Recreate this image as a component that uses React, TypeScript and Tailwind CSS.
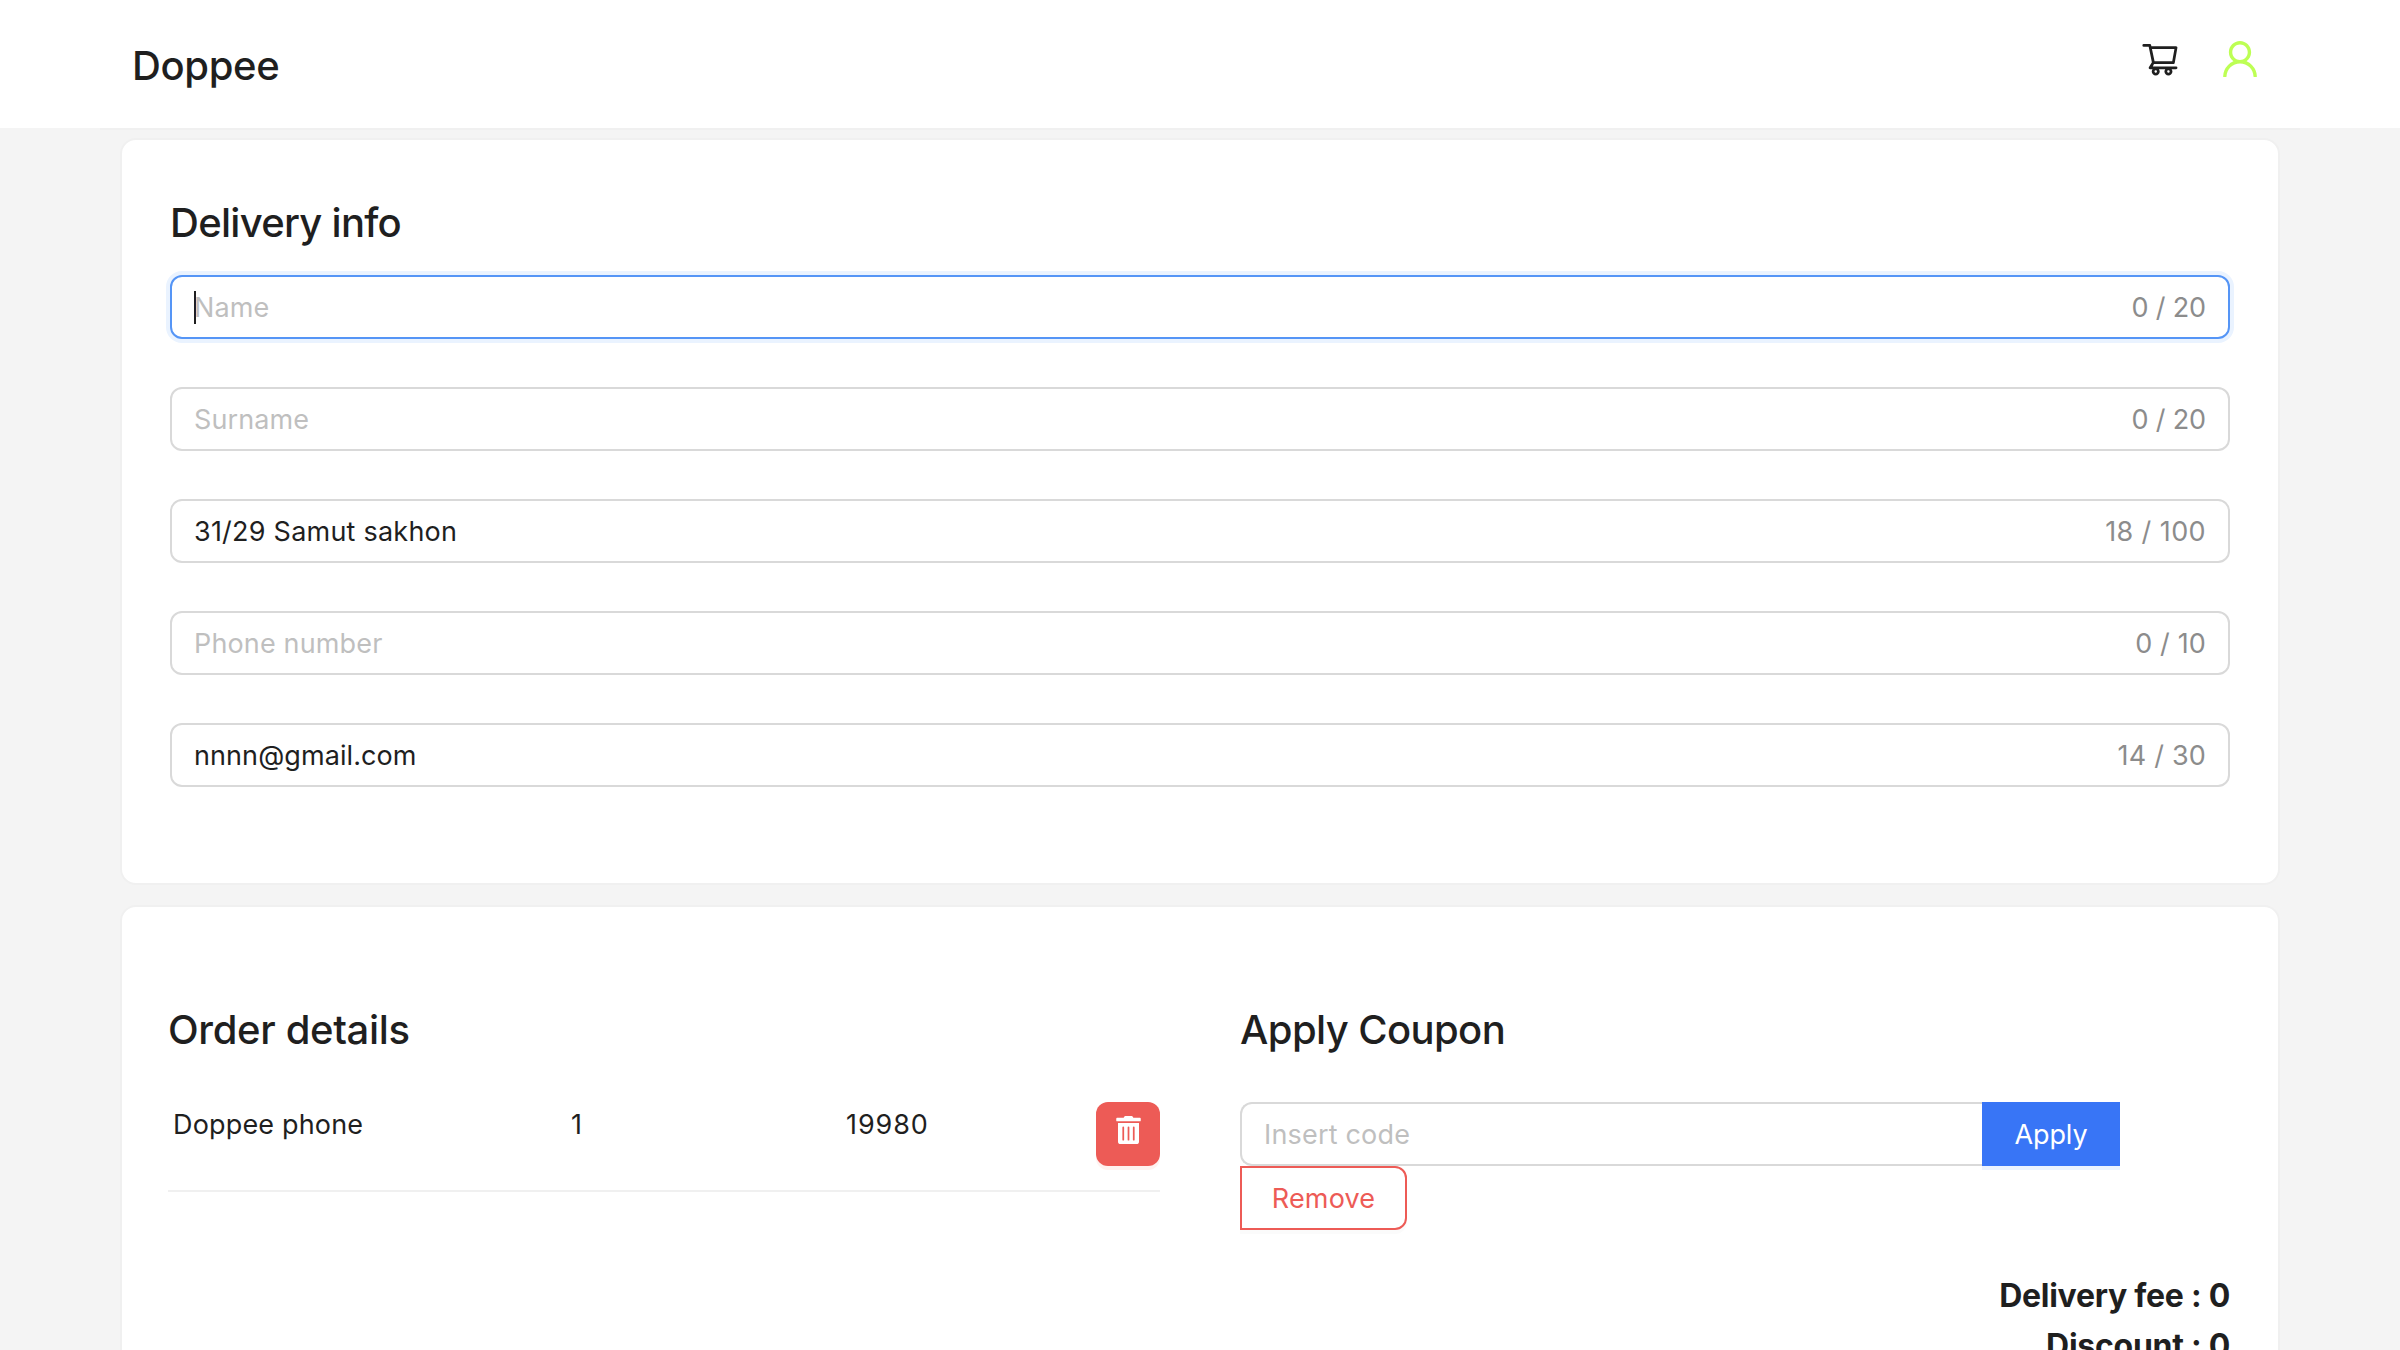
import { AiOutlineShoppingCart, AiOutlineUser } from 'react-icons/ai';
import { FaTrashAlt } from 'react-icons/fa';

type Field = {
  placeholder: string;
  value?: string;
  count: string;
  countTracking: string;
  textTracking: string;
  focused?: boolean;
};

const fields: Field[] = [
  { placeholder: 'Name', count: '0 / 20', countTracking: 'tracking-[-0.15px]', textTracking: 'tracking-[0.15px]', focused: true },
  { placeholder: 'Surname', count: '0 / 20', countTracking: 'tracking-[-0.15px]', textTracking: 'tracking-[0.12px]' },
  { placeholder: 'Address', value: '31/29 Samut sakhon', count: '18 / 100', countTracking: 'tracking-[0.4px]', textTracking: 'tracking-[0.23px]' },
  { placeholder: 'Phone number', count: '0 / 10', countTracking: 'tracking-[0.15px]', textTracking: 'tracking-[0.15px]' },
  { placeholder: 'Email', value: 'nnnn@gmail.com', count: '14 / 30', countTracking: 'tracking-[0.2px]', textTracking: 'tracking-[0.08px]' },
];

function Header() {
  return (
    <header className="flex h-32 items-start justify-between bg-white pr-[137px] pl-[132px]">
      <h1 className="mt-[43px] text-[40px] leading-[45px] font-medium tracking-[-0.35px]">Doppee</h1>
      <div className="flex items-start gap-[37px]">
        <AiOutlineShoppingCart className="mt-[39px] size-10" />
        <AiOutlineUser className="mt-9 size-[46px] text-[#bdff54]" />
      </div>
    </header>
  );
}

function TextField({ field }: { field: Field }) {
  const frame = field.focused
    ? 'border-[#5595f6] shadow-[0_0_0_4px_#eaf3ff]'
    : 'border-[#d9d9d9]';
  return (
    <div className={`flex h-16 items-center justify-between rounded-xl border-2 bg-white px-[22px] leading-[43px] ${frame}`}>
      <div className="flex items-center">
        {field.focused && <span className="-mr-0.5 h-[33px] w-0.5 bg-[#1f1f1f]" />}
        <span className={`pt-px ${field.textTracking} ${field.value ? '' : 'text-[#bfbfbf]'}`}>
          {field.value ?? field.placeholder}
        </span>
      </div>
      <span className={`pt-px text-[#8c8c8c] ${field.countTracking}`}>{field.count}</span>
    </div>
  );
}

function DeliveryInfo() {
  return (
    <section className="h-[747px] rounded-2xl border-2 border-[#f0f0f0] bg-white px-12 pt-[60px]">
      <h2 className="mb-[30px] text-[40px] leading-[45px] font-medium tracking-[-0.72px]">Delivery info</h2>
      <div className="flex flex-col gap-12">
        {fields.map((field) => (
          <TextField key={field.placeholder} field={field} />
        ))}
      </div>
    </section>
  );
}

function OrderDetails() {
  return (
    <div className="w-[992px]">
      <h2 className="text-[40px] leading-[45px] font-medium tracking-[-0.35px]">Order details</h2>
      <div className="mt-[50px] flex h-[90px] items-start border-b-2 border-[#f0f0f0] pl-[5px]">
        <span className="w-[398px] leading-[45px] tracking-[0.17px]">Doppee phone</span>
        <span className="w-[275px] leading-[45px]">1</span>
        <span className="flex-1 leading-[45px] tracking-[0.9px]">19980</span>
        <button className="flex size-16 justify-center rounded-xl bg-[#ed5b56] pt-3.5 text-white shadow-[0_4px_0_#fff2f0]">
          <FaTrashAlt className="h-7 w-[25px]" />
        </button>
      </div>
    </div>
  );
}

function Coupon() {
  return (
    <div className="w-[990px]">
      <h2 className="text-[40px] leading-[45px] font-medium tracking-[-0.6px]">Apply Coupon</h2>
      <div className="mt-[50px] flex w-[880px]">
        <div className="flex h-16 flex-1 items-center rounded-l-xl border-2 border-r-0 border-[#d9d9d9] px-[22px] leading-[43px] text-[#bfbfbf]">
          <span className="pt-px tracking-[0.18px]">Insert code</span>
        </div>
        <button className="h-16 w-[138px] bg-[#3875f6] pt-px leading-[43px] tracking-[-0.1px] text-white shadow-[0_4px_0_#ebf3ff]">
          Apply
        </button>
      </div>
      <button className="block h-16 w-[167px] rounded-r-xl border-2 border-[#ed5b56] pt-px leading-[43px] tracking-[0.18px] text-[#ed5b56] shadow-[0_4px_0_#fbfbfb]">
        Remove
      </button>
      <div className="mt-[41px] text-right text-[32px] leading-[50px] font-bold tracking-[-0.27px]">
        <p>Delivery fee : 0</p>
        <p>Discount : 0</p>
      </div>
    </div>
  );
}

export default function App() {
  return (
    <div className="h-[1350px] overflow-hidden bg-[#f4f4f4] font-['Inter',sans-serif] text-[27px] text-[#1f1f1f]">
      <Header />
      <div className="mx-[100px] h-0.5 bg-[#f0f0f0]" />
      <main className="mx-[120px] mt-2 flex flex-col gap-5">
        <DeliveryInfo />
        <section className="flex h-[600px] items-start gap-20 rounded-2xl border-2 border-[#f0f0f0] bg-white pt-[100px] pl-[46px]">
          <OrderDetails />
          <Coupon />
        </section>
      </main>
    </div>
  );
}
